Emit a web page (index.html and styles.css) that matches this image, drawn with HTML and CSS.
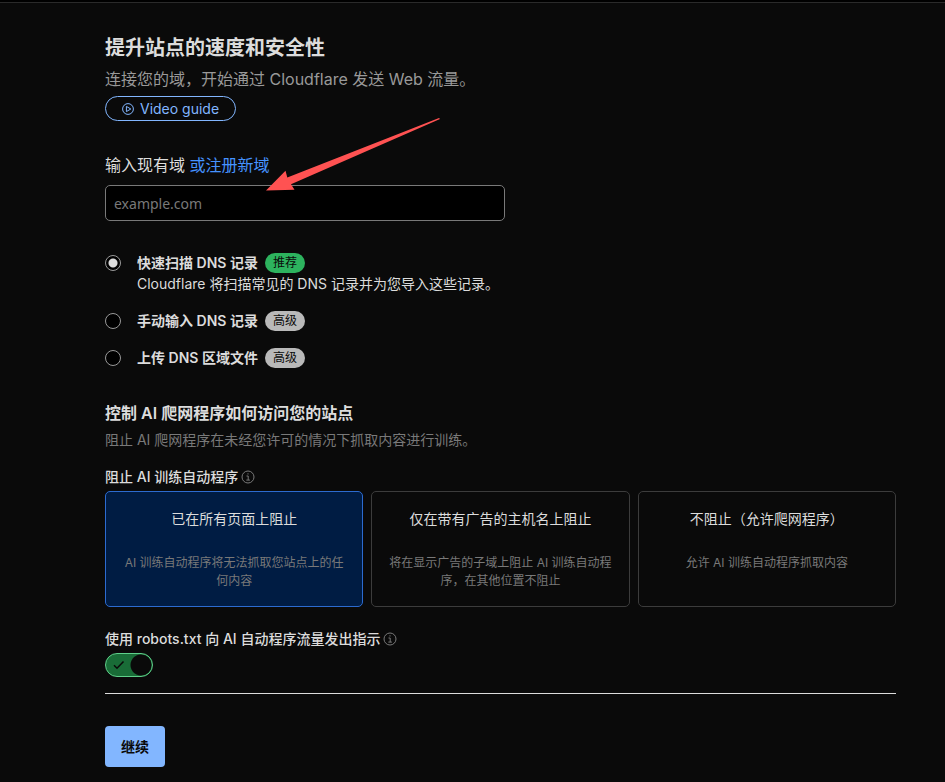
FILE: index.html
```
<!DOCTYPE html>
<html lang="zh-CN">
<head>
  <meta charset="UTF-8">
  <meta name="viewport" content="width=device-width, initial-scale=1">
  <title>提升站点的速度和安全性</title>
  <link rel="stylesheet" href="styles.css">
</head>
<body>
  <div class="topbar"></div>

  <main class="container">
    <header>
      <h1>提升站点的速度和安全性</h1>
      <p class="subtitle">连接您的域，开始通过 Cloudflare 发送 Web 流量。</p>
      <button type="button" class="video-btn">
        <svg width="12" height="12" viewBox="0 0 12 12" fill="none" stroke="currentColor">
          <circle cx="6" cy="6" r="5.4"/>
          <path d="M4.4 3.4v5.2L8.8 6z" stroke-linejoin="round"/>
        </svg>
        Video guide
      </button>
    </header>

    <form>
      <!-- Dominio -->
      <div class="domain">
        <div class="domain-label">
          <label for="domain">输入现有域</label>
          <a href="#">或注册新域</a>
        </div>
        <input type="text" id="domain" class="domain-input" placeholder="example.com">
        <svg class="arrow" width="174" height="74" viewBox="0 0 174 74">
          <path d="M0 72.5L19.500 52.700L21.300 59.500L173 0L174 1L25 66.200L28.500 71.800z" fill="#ff5252"/>
        </svg>
      </div>

      <!-- DNS -->
      <div class="dns">
        <div class="option">
          <input type="radio" name="dns" id="scan" checked>
          <div>
            <div class="option-title">
              <label for="scan">快速扫描 DNS 记录</label>
              <span class="badge green">推荐</span>
            </div>
            <p>Cloudflare 将扫描常见的 DNS 记录并为您导入这些记录。</p>
          </div>
        </div>
        <div class="option">
          <input type="radio" name="dns" id="manual">
          <div class="option-title">
            <label for="manual">手动输入 DNS 记录</label>
            <span class="badge">高级</span>
          </div>
        </div>
        <div class="option">
          <input type="radio" name="dns" id="upload">
          <div class="option-title">
            <label for="upload">上传 DNS 区域文件</label>
            <span class="badge">高级</span>
          </div>
        </div>
      </div>

      <!-- AI -->
      <h2>控制 AI 爬网程序如何访问您的站点</h2>
      <p class="hint">阻止 AI 爬网程序在未经您许可的情况下抓取内容进行训练。</p>

      <div class="field-label">
        <span id="bots">阻止 AI 训练自动程序</span>
        <svg class="info" width="14" height="14" viewBox="0 0 14 14" fill="none" stroke="currentColor">
          <circle cx="7" cy="7" r="6"/>
          <path d="M5.500 6H7.200V10M5.300 10.100H8.900M6.400 3.900H7.600"/>
        </svg>
      </div>
      <div class="cards" role="radiogroup" aria-labelledby="bots">
        <label class="card">
          <input type="radio" name="bots" checked>
          <span class="card-title">已在所有页面上阻止</span>
          <span class="card-text">AI 训练自动程序将无法抓取您站点上的任何内容</span>
        </label>
        <label class="card">
          <input type="radio" name="bots">
          <span class="card-title">仅在带有广告的主机名上阻止</span>
          <span class="card-text">将在显示广告的子域上阻止 AI 训练自动程序，在其他位置不阻止</span>
        </label>
        <label class="card">
          <input type="radio" name="bots">
          <span class="card-title">不阻止（允许爬网程序）</span>
          <span class="card-text">允许 AI 训练自动程序抓取内容</span>
        </label>
      </div>

      <div class="field-label">
        <label for="robots">使用 robots.txt 向 AI 自动程序流量发出指示</label>
        <svg class="info" width="14" height="14" viewBox="0 0 14 14" fill="none" stroke="currentColor">
          <circle cx="7" cy="7" r="6"/>
          <path d="M5.500 6H7.200V10M5.300 10.100H8.900M6.400 3.900H7.600"/>
        </svg>
      </div>
      <div class="switch">
        <input type="checkbox" id="robots" checked>
        <svg width="12" height="10" viewBox="0 0 12 10" fill="none" stroke="#0a0a0a" stroke-width="1.500">
          <path d="M1 5.200L4 8.200L10.500 1.500"/>
        </svg>
      </div>

      <hr>
      <button type="submit" class="submit">继续</button>
    </form>
  </main>
</body>
</html>
```

FILE: styles.css
```
* {
  box-sizing: border-box;
}

body {
  margin: 0;
  background: #0a0a0a;
  color: #dcdcdc;
  font-family: Inter, "Noto Sans CJK SC", sans-serif;
  font-size: 14px;
  line-height: 20px;
  text-spacing-trim: space-all;
}

h1, h2, p {
  margin: 0;
}

.topbar {
  height: 3px;
  background: #000;
  border-bottom: 1px solid #2a2a2a;
}

.container {
  padding: 30px 49px 15px 105px;
}

h1 {
  font-size: 20px;
  line-height: 30px;
}

.subtitle {
  margin: 4px 0 5px;
  color: #999;
  font-size: 16px;
  line-height: 24px;
}

.video-btn {
  display: flex;
  align-items: center;
  gap: 6px;
  height: 25px;
  padding: 0 16px;
  border: 1px solid #82b6ff;
  border-radius: 13px;
  background: transparent;
  color: #82b6ff;
  font-family: inherit;
  font-size: 14px;
}

.domain {
  position: relative;
  margin-top: 32px;
}

.domain-label {
  margin-bottom: 8px;
  font-size: 16px;
  line-height: 24px;
}

.domain-label a {
  color: #4693ff;
  text-decoration: none;
}

.domain-input {
  display: block;
  width: 100%;
  max-width: 400px;
  height: 36px;
  padding: 0 8px;
  border: 1px solid #797979;
  border-radius: 5px;
  background: #000;
  color: #dcdcdc;
  font-family: "Noto Sans", "Noto Sans CJK SC", sans-serif;
  font-size: 14px;
}

.domain-input::placeholder {
  color: #797979;
}

.arrow {
  position: absolute;
  left: 161px;
  top: -35px;
  pointer-events: none;
}

.dns {
  display: grid;
  gap: 17px;
  margin: 32px 0 33px;
}

.option {
  display: flex;
  gap: 16px;
}

.option input {
  appearance: none;
  flex: none;
  width: 16px;
  height: 16px;
  margin: 2px 0;
  border: 1px solid #999;
  border-radius: 50%;
  background: #000;
}

.option input:checked {
  background: radial-gradient(circle, #dcdcdc 4px, #000 5px);
}

.option-title {
  display: flex;
  gap: 7px;
  font-weight: 600;
}

.option p {
  line-height: 21px;
}

.badge {
  padding: 0 8px;
  border-radius: 10px;
  background: #b9b9b9;
  color: #0a0a0a;
  font-size: 12px;
  font-weight: 400;
}

.badge.green {
  background: #2db35e;
}

h2 {
  font-size: 16px;
  line-height: 24px;
  font-weight: 600;
}

.hint {
  margin: 5px 0 17px;
  color: #797979;
}

.field-label {
  display: flex;
  align-items: center;
  gap: 3px;
  margin-bottom: 4px;
  font-weight: 500;
}

.info {
  color: #797979;
}

.cards {
  display: grid;
  grid-template-columns: repeat(3, 1fr);
  gap: 8px;
  margin-bottom: 22px;
}

.card {
  display: flex;
  flex-direction: column;
  gap: 25px;
  padding: 17px 16px 16px;
  border: 1px solid #3c3c3c;
  border-radius: 5px;
  text-align: center;
  cursor: pointer;
}

.card:has(:checked) {
  border-color: #2c6bd0;
  background: #001c43;
}

.card input {
  position: absolute;
  opacity: 0;
}

.card-text {
  color: #797979;
  font-size: 12px;
  line-height: 18px;
}

.switch {
  position: relative;
  width: 48px;
}

.switch input {
  appearance: none;
  display: block;
  width: 48px;
  height: 24px;
  margin: 0;
  border: 1px solid #5fd08a;
  border-radius: 12px;
  background: radial-gradient(circle at 35px 11px, #0a0a0a 10px, #196c37 11px);
}

.switch svg {
  position: absolute;
  left: 8px;
  top: 7px;
}

hr {
  margin: 16px 0 32px;
  border: 0;
  border-top: 1px solid #dcdcdc;
}

.submit {
  height: 41px;
  padding: 0 16px 2px;
  border: 0;
  border-radius: 4px;
  background: #82b6ff;
  color: #0a0a0a;
  font-family: inherit;
  font-size: 14px;
  font-weight: 600;
}
```
